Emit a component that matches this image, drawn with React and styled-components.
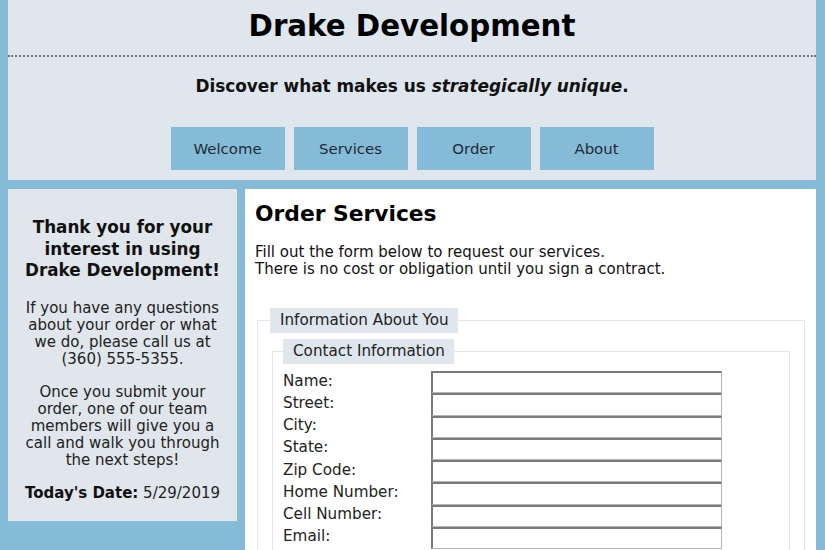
import React from "react";
import styled, { createGlobalStyle } from "styled-components";

const Global = createGlobalStyle`
  html, body { margin: 0; padding: 0; }
  body {
    background: #86bbd8;
    font-family: "DejaVu Sans", Verdana, sans-serif;
    color: #111;
  }
`;

const Page = styled.div`
  padding: 0 9px 0 8px;
`;

const Header = styled.header`
  background: #dfe6ed;
  padding-bottom: 10px;
`;

const TitleBar = styled.div`
  border-bottom: 2px dotted #777;
  padding-bottom: 5px;
`;

const Title = styled.h1`
  margin: 0;
  padding-top: 2px;
  text-align: center;
  font-size: 29.3px;
  line-height: 48px;
  font-weight: bold;
  color: #000;
`;

const Tagline = styled.p`
  margin: 19px 0 0;
  text-align: center;
  font-size: 16.9px;
  line-height: 20px;
  font-weight: bold;
  color: #111;
  em { font-style: italic; }
`;

const Nav = styled.nav`
  display: flex;
  justify-content: center;
  gap: 9px;
  margin-top: 31px;
`;

const NavButton = styled.a`
  width: 114px;
  height: 43px;
  display: flex;
  align-items: center;
  justify-content: center;
  background: #86bbd8;
  color: #1c2a38;
  font-size: 14.9px;
  text-decoration: none;
`;

const Body = styled.div`
  display: grid;
  grid-template-columns: 229px 1fr;
  gap: 8px;
  margin-top: 9px;
  align-items: start;
`;

const Sidebar = styled.aside`
  background: #e0e6ec;
  padding: 28px 8px 19px;
  text-align: center;
`;

const SideHeading = styled.h3`
  margin: 0 0 18px;
  font-size: 16.8px;
  line-height: 21.5px;
  font-weight: bold;
  color: #111;
`;

const SideText = styled.p`
  margin: ${(p) => (p.$last ? "0" : "0 0 16px")};
  font-size: 15px;
  line-height: 17px;
  color: #222;
  b { color: #111; }
`;

const Main = styled.main`
  background: #fff;
  padding: 8px 9px 20px 10px;
  min-height: 400px;
`;

const MainTitle = styled.h2`
  margin: 0;
  font-size: 21.8px;
  line-height: 34px;
  font-weight: bold;
  color: #000;
`;

const Intro = styled.p`
  margin: 13px 0 0;
  font-size: 15px;
  line-height: 17px;
  color: #111;
`;

const Fieldset = styled.fieldset`
  margin: ${(p) => (p.$inner ? "0 2px" : "30px 2px 0")};
  border: 1px solid #e3e6e9;
  padding: ${(p) => (p.$inner ? "7px 10px 10px" : "6px 12px 10px")};
  min-width: 0;
`;

const Legend = styled.legend`
  background: #dfe6ed;
  padding: 4px 9px 4px 10px;
  font-size: 15.2px;
  line-height: 17px;
  color: #222;
`;

const FormGrid = styled.div`
  display: grid;
  grid-template-columns: 148px 291px;
  grid-auto-rows: 22.25px;
  align-items: center;
`;

const Label = styled.label`
  font-size: 15.2px;
  line-height: 17px;
  color: #222;
  white-space: nowrap;
  margin-top: -2px;
`;

const Input = styled.input`
  box-sizing: border-box;
  width: 291px;
  height: 22.25px;
  margin: 0;
  border-style: solid;
  border-width: 2px 1px 1px 2px;
  border-color: #7a7a7a #b5b5b5 #b5b5b5 #7a7a7a;
  background: #fff;
`;

const fields = [
  "Name:",
  "Street:",
  "City:",
  "State:",
  "Zip Code:",
  "Home Number:",
  "Cell Number:",
  "Email:",
];

export default function App() {
  return (
    <Page>
      <Global />
      <Header>
        <TitleBar>
          <Title>Drake Development</Title>
        </TitleBar>
        <Tagline>
          Discover what makes us <em>strategically unique</em>.
        </Tagline>
        <Nav>
          <NavButton href="#">Welcome</NavButton>
          <NavButton href="#">Services</NavButton>
          <NavButton href="#">Order</NavButton>
          <NavButton href="#">About</NavButton>
        </Nav>
      </Header>
      <Body>
        <Sidebar>
          <SideHeading>
            Thank you for your interest in using Drake Development!
          </SideHeading>
          <SideText>
            If you have any questions about your order or what we do, please
            call us at (360) 555-5355.
          </SideText>
          <SideText>
            Once you submit your order, one of our team members will give you a
            call and walk you through the next steps!
          </SideText>
          <SideText $last>
            <b>Today's Date:</b> 5/29/2019
          </SideText>
        </Sidebar>
        <Main>
          <MainTitle>Order Services</MainTitle>
          <Intro>
            Fill out the form below to request our services.
            <br />
            There is no cost or obligation until you sign a contract.
          </Intro>
          <Fieldset>
            <Legend>Information About You</Legend>
            <Fieldset $inner>
              <Legend>Contact Information</Legend>
              <FormGrid>
                {fields.map((f) => (
                  <React.Fragment key={f}>
                    <Label>{f}</Label>
                    <Input type="text" />
                  </React.Fragment>
                ))}
              </FormGrid>
            </Fieldset>
          </Fieldset>
        </Main>
      </Body>
    </Page>
  );
}
